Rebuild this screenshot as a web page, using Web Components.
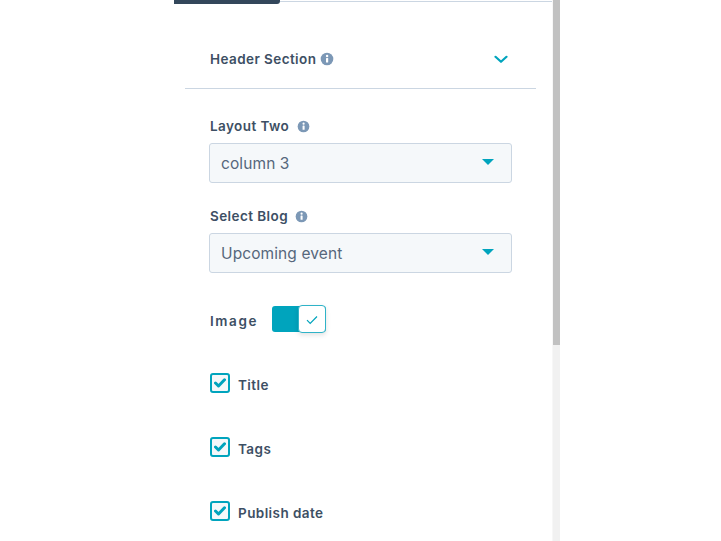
<!DOCTYPE html>
<html><head><meta charset="utf-8"><style>
html,body{margin:0;height:541px;overflow:hidden;background:#fff;font-family:"Inter","Noto Sans",sans-serif}
</style></head><body>
<template id="t-panel"><style>
:host{display:block;width:560px;height:541px;background:#fff;overflow:hidden}
.main{display:flex;height:100%}
.content{flex:none;width:552px}
.tabs{display:flex;height:4px;padding-left:174px}
.tab{width:106px;height:4px;background:#33475b;border-radius:0 0 3px 0}
.rule{flex:1;height:1px;margin-top:1px;background:#cbd6e2}
.sb{flex:none;width:8px;background:#f1f1f1;box-shadow:inset 1px 0 0 #f7f7f7}
.thumb{height:345px;width:7px;margin-left:1px;background:#c1c1c1}
.body{margin-left:185px;width:351px}
.inner{padding:0 24px;display:flex;flex-direction:column}
</style><div class="main"><div class="content"><div class="tabs"><div class="tab"></div><div class="rule"></div></div>
<div class="body"><slot name="head"></slot><div class="inner"><slot></slot></div></div></div>
<div class="sb"><div class="thumb"></div></div></div></template>

<template id="t-head"><style>
:host{display:flex;box-sizing:border-box;height:85px;width:351px;padding:45px 28px 0 25px;border-bottom:1px solid #cbd6e2;justify-content:space-between;align-items:flex-start}
.l{display:flex;align-items:center;gap:4px;font:600 13.500px/20px Inter,sans-serif;color:#3d4f64;letter-spacing:.42px}
svg{display:block}
.c{margin-top:6px}
</style><div class="l"><span><slot></slot></span><info-icon></info-icon></div>
<svg class="c" width="14" height="9" viewBox="0 0 14 9"><path d="M1.500 1.800 7 6.800l5.500-5" fill="none" stroke="#00a4bd" stroke-width="2.200" stroke-linecap="round" stroke-linejoin="round"/></svg></template>

<template id="t-info"><style>
:host{display:inline-block;width:var(--info-size,14px);height:var(--info-size,14px);flex:none}
svg{display:block;width:100%;height:100%}
</style><svg viewBox="0 0 14 14"><circle cx="7" cy="7" r="6.300" fill="#7c98b6"/><rect x="6" y="6" width="2.200" height="4.600" rx=".5" fill="#fff"/><circle cx="7.100" cy="4" r="1.200" fill="#fff"/></svg></template>

<template id="t-select"><style>
:host{display:block;--info-size:13px}
.lab{display:flex;align-items:center;gap:var(--label-gap,8px);height:20px;margin:0 0 7px 1px;font:600 13.500px/20px Inter,sans-serif;color:#3d4f64;letter-spacing:.42px}
.box{box-sizing:border-box;height:40px;width:303px;background:#f5f8fa;border:1px solid #cbd6e2;border-radius:3px;display:flex;align-items:center;justify-content:space-between;padding:0 17px 0 11px;font:400 15.500px/22px Inter,sans-serif;color:#56677c;letter-spacing:.1px}
.t{padding-top:2px}
.arr{width:0;height:0;border-left:6.500px solid transparent;border-right:6.500px solid transparent;border-top:6.500px solid #00a4bd;margin-top:-2px}
</style><div class="lab"><span><slot name="label"></slot></span><info-icon></info-icon></div>
<div class="box"><span class="t"><slot></slot></span><span class="arr"></span></div></template>

<template id="t-toggle"><style>
:host{display:flex;align-items:center;height:28px;margin-left:1px;font:600 13.500px/20px Inter,sans-serif;color:#3d4f64;letter-spacing:1.600px}
span{width:62px;padding-top:3px}
.sw{position:relative;width:54px;height:26px;background:#00a4bd;border-radius:3px}
.k{position:absolute;right:0;top:-1px;box-sizing:border-box;width:28px;height:28px;background:#fff;border:1px solid #2fb3c8;border-radius:4px;box-shadow:0 2px 5px rgba(0,0,0,.12);display:flex;align-items:center;justify-content:center;padding-top:2px}
svg{display:block}
</style><span><slot></slot></span><div class="sw"><div class="k"><svg width="12" height="10" viewBox="0 0 12 10"><path d="M1 5.200 4.200 8.400 11 1.500" fill="none" stroke="#00a4bd" stroke-width="1.200"/></svg></div></div></template>

<template id="t-check"><style>
:host{display:flex;align-items:center;gap:8px;height:20px;margin:0 0 44px 1px;font:600 13.500px/20px Inter,sans-serif;color:#3d4f64;letter-spacing:.42px}
.b{box-sizing:border-box;width:20px;height:20px;border:2px solid #00a4bd;border-radius:3px;background:#f5f8fa;display:flex;align-items:center;justify-content:center}
svg{display:block}
span{padding-top:3px}
</style><div class="b"><svg width="12" height="10" viewBox="0 0 12 10"><path d="M1.500 5 4.500 8 10.500 1.800" fill="none" stroke="#00a4bd" stroke-width="3" stroke-linecap="round" stroke-linejoin="round"/></svg></div><span><slot></slot></span></template>

<editor-panel>
<section-head slot="head">Header Section</section-head>
<select-field style="margin-top:27px"><span slot="label">Layout Two</span>column 3</select-field>
<select-field style="margin-top:23px;--label-gap:7px"><span slot="label">Select Blog</span>Upcoming event</select-field>
<toggle-field style="margin-top:32px;margin-bottom:40px">Image</toggle-field>
<check-field>Title</check-field>
<check-field>Tags</check-field>
<check-field>Publish date</check-field>
</editor-panel>
<script>
const reg=(n,t)=>customElements.define(n,class extends HTMLElement{constructor(){super();this.attachShadow({mode:"open"}).appendChild(document.getElementById(t).content.cloneNode(true))}});
reg("info-icon","t-info");reg("editor-panel","t-panel");reg("section-head","t-head");reg("select-field","t-select");reg("toggle-field","t-toggle");reg("check-field","t-check");
</script>
</body></html>
